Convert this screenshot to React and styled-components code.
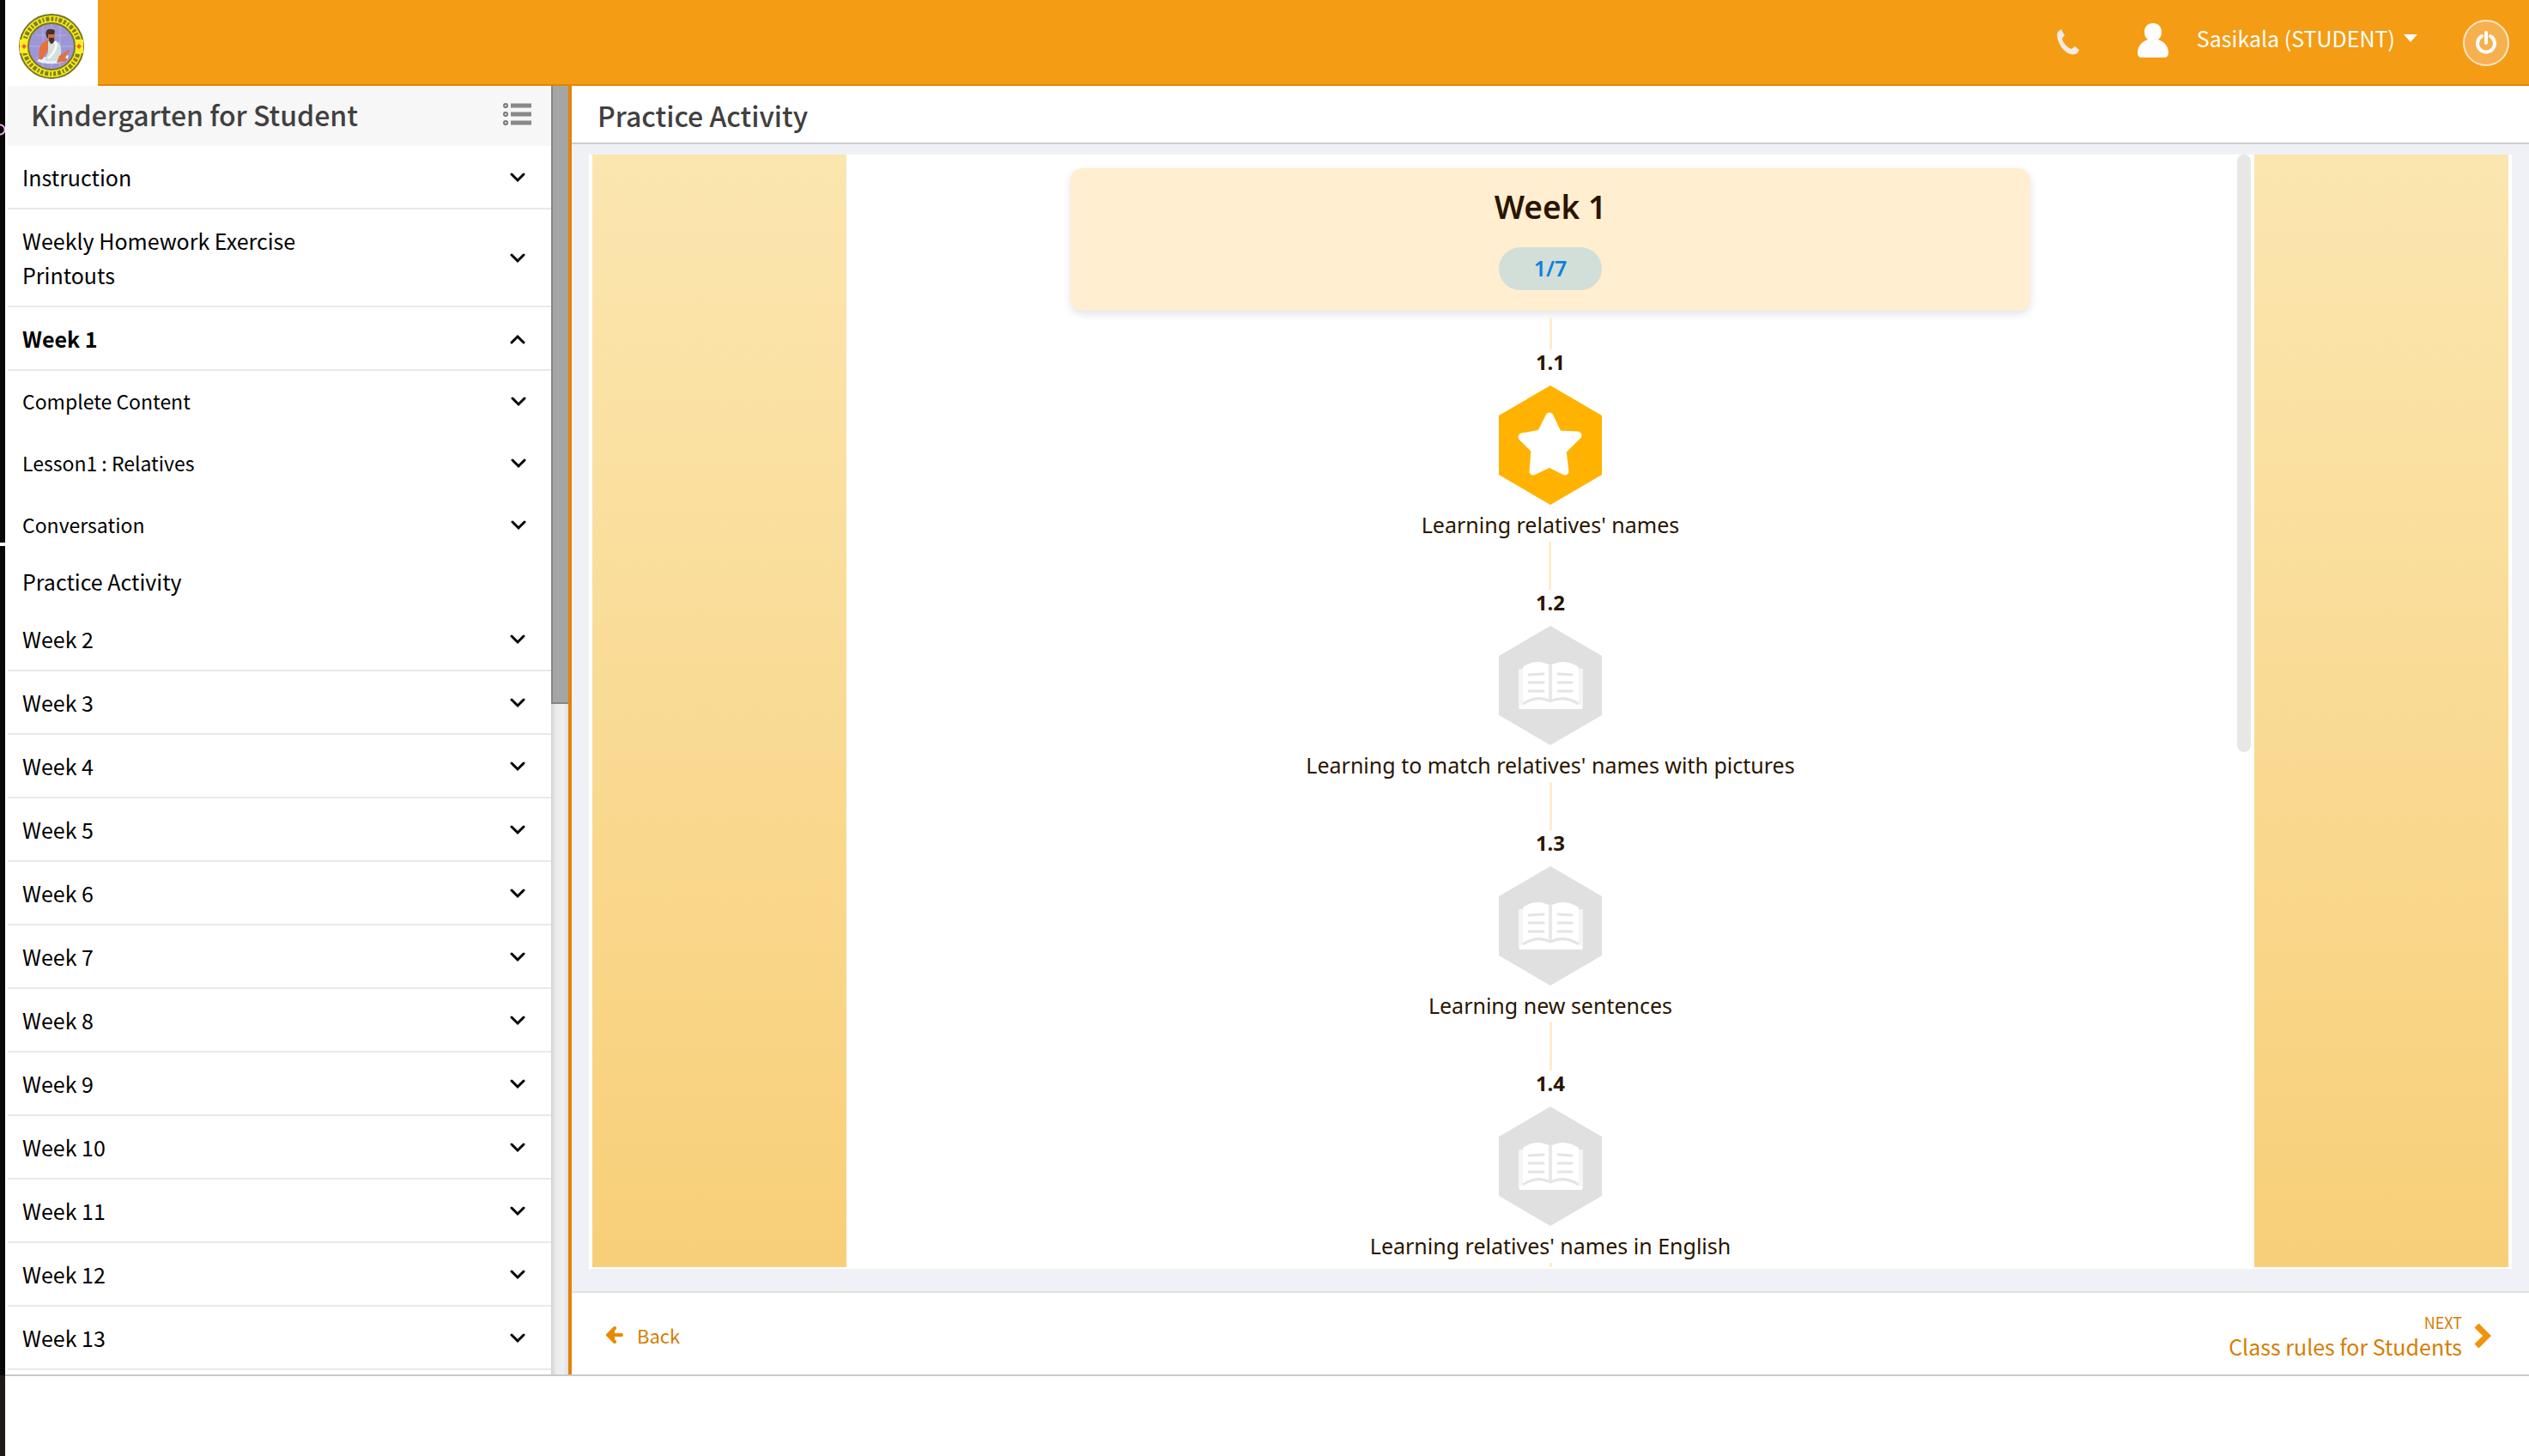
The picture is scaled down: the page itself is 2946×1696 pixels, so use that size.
import React from "react";
import styled, { createGlobalStyle } from "styled-components";

const lessons = [
  { id: "instruction", title: "Instruction" },
  { id: "homework", title: "Weekly Homework Exercise Printouts" },
  {
    id: "week-1",
    title: "Week 1",
    open: true,
    children: [
      { id: "complete", title: "Complete Content", arrow: true },
      { id: "lesson1", title: "Lesson1 : Relatives", arrow: true },
      { id: "conversation", title: "Conversation", arrow: true },
      { id: "practice", title: "Practice Activity", arrow: false },
    ],
  },
  ...Array.from({ length: 12 }, (_, i) => ({
    id: `week-${i + 2}`,
    title: `Week ${i + 2}`,
  })),
];

const steps = [
  { id: "1.1", title: "Learning relatives' names", current: true },
  { id: "1.2", title: "Learning to match relatives' names with pictures" },
  { id: "1.3", title: "Learning new sentences" },
  { id: "1.4", title: "Learning relatives' names in English" },
];

function Logo() {
  return (
    <svg width="80" height="80" viewBox="0 0 80 80" aria-label="School logo">
      <circle cx="40" cy="40" r="37" fill="#f3ea1c" stroke="#77752c" strokeWidth="2" />
      <circle
        cx="40"
        cy="40"
        r="32"
        fill="none"
        stroke="#5d5a12"
        strokeWidth="5"
        strokeDasharray="3 2 2 2 4 2"
        opacity="0.75"
      />
      <path d="M3 32h9v16H3zM68 32h9v16h-9z" fill="#f8ee22" />
      <circle cx="40" cy="40" r="27" fill="#9c96d6" stroke="#77752c" strokeWidth="2" />
      <path
        d="M22 27h36M15 40h50M22 53h36M30 16v48M40 14v52M50 16v48"
        stroke="#b4afe2"
        strokeWidth="1"
        fill="none"
      />
      <path d="M5 40l3-3 3 3-3 3zM69 40l3-3 3 3-3 3z" fill="#f0642a" />
      <path d="M23 57c4-5 10-5 15-4l21-3c2 4-2 9-8 9-9 2-22 2-28-2z" fill="#e8f0f5" />
      <path d="M36 33c-6 1-10 5-10 12l-1 9c3 3 6 1 6-3l3-4 8-13z" fill="#e8703c" />
      <path d="M36 34l12 1c4 5 4 12 2 19-5 4-12 4-18 2l4-9z" fill="#d3dfdd" />
      <path d="M44 34c3 6 1 12-8 20" fill="none" stroke="#f5faf7" strokeWidth="3" />
      <path d="M49 51l11-7 1 2-5 7 3 2-3 3-10 1z" fill="#dc7448" />
      <circle cx="39" cy="27" r="5" fill="#c66f42" />
      <path d="M34 22c2-3 8-3 10 0l-1 4h-7v5c-3-3-3-6-2-9zM37 30h6c1 4-1 7-3 7s-3-3-3-7z" fill="#4b3028" />
    </svg>
  );
}

function Chevron({ up }) {
  return (
    <svg width="20" height="12" viewBox="0 0 20 12" aria-hidden="true">
      <path
        d={up ? "M3 10l7-7 7 7" : "M3 2l7 7 7-7"}
        fill="none"
        stroke="#000"
        strokeWidth="3"
        strokeLinecap="round"
      />
    </svg>
  );
}

function StarHexagon() {
  return (
    <svg width="120" height="139" viewBox="0 0 120 139" aria-hidden="true">
      <path d="M60 0l60 35v69l-60 35L0 104V35z" fill="#ffb300" />
      <path
        d="M59 36l10 21 23 1-18 18 3 24-18-9-19 9 2-25-15-15 22-4z"
        fill="#fff"
        stroke="#fff"
        strokeWidth="9"
        strokeLinejoin="round"
      />
    </svg>
  );
}

function BookHexagon() {
  return (
    <svg width="120" height="139" viewBox="0 0 120 139" aria-hidden="true">
      <path d="M60 0l60 35v69l-60 35L0 104V35z" fill="#e0e0e0" />
      <path d="M23 50h75v44q0 3-3 3H26q-3 0-3-3z" fill="#f5f5f5" />
      <path d="M28 48q15-11 32-2 17-9 33 2v43H28z" fill="#fff" />
      <path d="M24 93q20-12 36-4 17-9 37 4v4H24z" fill="#fff" />
      <path d="M28 91q17-11 32-3 16-8 33 3" fill="none" stroke="#e4e4e4" strokeWidth="3" />
      <path d="M60 46v42" stroke="#e8e8e8" strokeWidth="4" />
      <path
        d="M35 57l17-1M35 66h17M35 76h17M69 56l16 1M69 66h16M69 76h16"
        stroke="#e4e4e4"
        strokeWidth="3"
        strokeLinecap="round"
      />
    </svg>
  );
}

function Header() {
  return (
    <TopBar>
      <LogoBox href="#home">
        <Logo />
      </LogoBox>
      <TopActions>
        <IconButton aria-label="Call">
          <svg width="28" height="32" viewBox="0 0 28 32">
            <path
              d="M2 3l4-3 4 7-3 4c2 6 6 10 11 12l4-3 5 4-2 4c-5 3-12 1-17-5C3 17 0 9 2 3z"
              fill="#f0ebe4"
            />
          </svg>
        </IconButton>
        <UserMenu>
          <svg width="36" height="40" viewBox="0 0 36 40" aria-hidden="true">
            <path
              d="M18 0c6 0 10 4 10 10 0 4-1 7-4 9 8 3 12 8 12 16 0 3-2 5-5 5H5c-3 0-5-2-5-5 0-8 4-13 12-16-3-2-4-5-4-9C8 4 12 0 18 0z"
              fill="#fdfdfd"
            />
          </svg>
          <UserName>
            Sasikala (STUDENT)
            <svg width="16" height="9" viewBox="0 0 16 9" aria-hidden="true">
              <path d="M0 0h16L8 9z" fill="#fff" />
            </svg>
          </UserName>
        </UserMenu>
        <PowerButton aria-label="Log out">
          <svg width="26" height="28" viewBox="0 0 26 28">
            <path
              d="M8 6a10 10 0 1 0 10 0M13 2v12"
              fill="none"
              stroke="#fff"
              strokeWidth="4"
              strokeLinecap="round"
            />
          </svg>
        </PowerButton>
      </TopActions>
    </TopBar>
  );
}

function Sidebar() {
  return (
    <SidebarWrapper>
      <Menu>
        <MenuHeader>
          <MenuTitle>Kindergarten for Student</MenuTitle>
          <IconButton aria-label="Contents">
            <svg width="34" height="28" viewBox="0 0 34 28">
              <g fill="none" stroke="#777" strokeWidth="2">
                <circle cx="4" cy="4" r="2" />
                <circle cx="4" cy="14" r="2" />
                <circle cx="4" cy="24" r="2" />
              </g>
              <path d="M10 4h24M10 14h24M10 24h24" stroke="#888" strokeWidth="5" />
            </svg>
          </IconButton>
        </MenuHeader>
        {lessons.map((item) => (
          <React.Fragment key={item.id}>
            <MenuRow $active={item.open} aria-expanded={!!item.open}>
              <span>{item.title}</span>
              <Chevron up={item.open} />
            </MenuRow>
            {item.children?.map((child) => (
              <SubRow key={child.id} $leaf={!child.arrow}>
                <span>{child.title}</span>
                {child.arrow && <Chevron />}
              </SubRow>
            ))}
          </React.Fragment>
        ))}
      </Menu>
      <MenuTrack>
        <MenuThumb />
      </MenuTrack>
    </SidebarWrapper>
  );
}

function PracticePath() {
  return (
    <Path>
      <WeekCard>
        <WeekTitle>Week 1</WeekTitle>
        <Progress>1/7</Progress>
      </WeekCard>
      <Connector $height={37} />
      {steps.map((step) => (
        <Step key={step.id}>
          <StepNumber>{step.id}</StepNumber>
          <StepButton aria-label={step.title}>
            {step.current ? <StarHexagon /> : <BookHexagon />}
          </StepButton>
          <StepTitle>{step.title}</StepTitle>
          <Connector $height={56} />
        </Step>
      ))}
    </Path>
  );
}

function App() {
  return (
    <>
      <GlobalStyle />
      <Page>
        <WindowEdge />
        <Shell>
          <Header />
          <Body>
            <Sidebar />
            <Main>
              <PageTitle>Practice Activity</PageTitle>
              <Stage>
                <Curtain />
                <Viewport>
                  <PracticePath />
                  <StageThumb />
                </Viewport>
                <Curtain />
              </Stage>
              <Footer>
                <BackLink href="#back">
                  <svg width="20" height="20" viewBox="0 0 20 20" aria-hidden="true">
                    <path
                      d="M10 2l-8 8 8 8M3 10h15"
                      fill="none"
                      stroke="#e88a00"
                      strokeWidth="4"
                      strokeLinecap="round"
                    />
                    <path d="M10 4l-7 6 7 6z" fill="#e88a00" />
                  </svg>
                  Back
                </BackLink>
                <NextLink href="#next">
                  <span>
                    <small>NEXT</small>
                    Class rules for Students
                  </span>
                  <svg width="20" height="30" viewBox="0 0 20 30" aria-hidden="true">
                    <path d="M3 3l12 12L3 27" fill="none" stroke="#f0930c" strokeWidth="7" />
                  </svg>
                </NextLink>
              </Footer>
            </Main>
          </Body>
        </Shell>
      </Page>
    </>
  );
}

const GlobalStyle = createGlobalStyle`
  * {
    box-sizing: border-box;
  }

  body {
    margin: 0;
    background: #fff;
    color: #000;
    font-family: "Noto Sans CJK SC", "Noto Sans", sans-serif;
    font-size: 25px;
  }

  button {
    padding: 0;
    border: 0;
    background: none;
    color: inherit;
    font: inherit;
    text-align: left;
    cursor: pointer;
  }

  a {
    color: inherit;
    text-decoration: none;
  }

  svg {
    display: block;
    flex: none;
  }
`;

const Page = styled.div`
  display: flex;
  height: 100vh;
  overflow: hidden;
`;

const WindowEdge = styled.div`
  flex: none;
  width: 6px;
  background: radial-gradient(circle at 0 151px, #000 4px, #f3a6ee 5px, #f3a6ee 6px, transparent 7px),
    linear-gradient(#0a0807 632px, #fff 632px, #fff 636px, #0a0807 636px, #0a0807 1602px, #1d1a18 1602px);
`;

const Shell = styled.div`
  display: flex;
  flex: 1;
  flex-direction: column;
  min-width: 0;
  height: calc(100vh - 93px);
  border-bottom: 2px solid #c9c9c9;
`;

const TopBar = styled.header`
  display: flex;
  flex: none;
  justify-content: space-between;
  height: 100px;
  background: #f49c14;
  border-bottom: 2px solid #e18400;
`;

const LogoBox = styled.a`
  display: flex;
  align-items: center;
  width: 108px;
  height: 100px;
  padding: 8px 14px 0;
  background: #fff;
`;

const TopActions = styled.div`
  display: flex;
  align-items: center;
  padding: 2px 23px 0 0;
`;

const IconButton = styled.button`
  display: flex;
`;

const UserMenu = styled.button`
  display: flex;
  align-items: center;
  gap: 33px;
  margin: 0 53px 6px 67px;
`;

const UserName = styled.span`
  display: flex;
  align-items: center;
  gap: 10px;
  padding-bottom: 6px;
  color: #fff;
`;

const PowerButton = styled.button`
  display: flex;
  align-items: center;
  justify-content: center;
  width: 54px;
  height: 54px;
  border: 2px solid #fbe6c8;
  border-radius: 50%;
  background: #f6b04e;
`;

const Body = styled.div`
  display: flex;
  flex: 1;
  min-height: 0;
`;

const SidebarWrapper = styled.aside`
  display: flex;
  flex: none;
  width: 660px;
  border-right: 4px solid #e58205;
`;

const Menu = styled.nav`
  display: flex;
  flex: 1;
  flex-direction: column;
  padding-left: 3px;
  overflow: hidden;
`;

const MenuHeader = styled.div`
  display: flex;
  flex: none;
  align-items: center;
  justify-content: space-between;
  height: 70px;
  padding: 0 23px 4px 27px;
  background: #f7f7f7;
`;

const MenuTitle = styled.h2`
  margin: 0;
  color: #404040;
  font-size: 32px;
  font-weight: 500;
  line-height: 40px;
`;

const MenuRow = styled.button`
  display: flex;
  flex: none;
  align-items: center;
  justify-content: space-between;
  padding: 16px 29px 16px 17px;
  border-bottom: 2px solid #e9e9e9;
  font-weight: ${({ $active }) => ($active ? 700 : 400)};
  line-height: 40px;

  span {
    max-width: 400px;
  }

  svg {
    margin-top: 2px;
  }
`;

const SubRow = styled.button`
  display: flex;
  flex: none;
  align-items: center;
  justify-content: space-between;
  height: ${({ $leaf }) => ($leaf ? 60 : 72)}px;
  padding: 0 28px 2px 17px;
  font-size: ${({ $leaf }) => ($leaf ? 25 : 23)}px;

  svg {
    margin-top: 2px;
  }
`;

const MenuTrack = styled.div`
  flex: none;
  width: 20px;
  background: linear-gradient(90deg, #d2d2d2, #ececec 30%, #f0f0f0 70%, #dcdfe4);
`;

const MenuThumb = styled.div`
  height: 48%;
  border: solid #858585;
  border-width: 0 0 2px 2px;
  background: #a5a5a5;
`;

const Main = styled.main`
  display: flex;
  flex: 1;
  flex-direction: column;
  min-width: 0;
  background: #f0f1f6;
`;

const PageTitle = styled.h1`
  flex: none;
  margin: 0;
  height: 68px;
  padding: 14px 30px;
  border-bottom: 2px solid #ccccd0;
  background: #fff;
  color: #404040;
  font-size: 32px;
  font-weight: 500;
  line-height: 40px;
`;

const Stage = styled.section`
  display: flex;
  flex: 1;
  min-height: 0;
  margin: 12px 20px 26px;
  border: solid #fff;
  border-width: 0 4px 2px;
  background: #fff;
`;

const Curtain = styled.div`
  flex: none;
  width: 296px;
  background: linear-gradient(#fbe6b0, #f8cf78);
`;

const Viewport = styled.div`
  position: relative;
  flex: 1;
  overflow: hidden;
`;

const Path = styled.div`
  display: flex;
  flex-direction: column;
  align-items: center;
  padding-top: 16px;
  color: #2a1500;
  font-family: "Noto Sans", sans-serif;
  font-size: 25px;
`;

const StageThumb = styled.div`
  position: absolute;
  top: 0;
  right: 4px;
  width: 16px;
  height: 696px;
  border-radius: 8px;
  background: #e7e7e5;
`;

const WeekCard = styled.div`
  display: flex;
  flex-direction: column;
  align-items: center;
  gap: 22px;
  width: 1118px;
  max-width: 90%;
  height: 166px;
  margin-bottom: 8px;
  padding-top: 20px;
  border-radius: 14px;
  background: #ffeed0;
  box-shadow: 0 4px 10px rgba(60, 70, 100, 0.15);
`;

const WeekTitle = styled.h3`
  margin: 0;
  font-size: 37px;
  font-weight: 600;
  line-height: 50px;
`;

const Progress = styled.span`
  width: 120px;
  padding-bottom: 2px;
  border-radius: 25px;
  background: #d2ded8;
  color: #0c80e0;
  font-weight: 600;
  line-height: 48px;
  text-align: center;
`;

const Connector = styled.div`
  width: 3px;
  height: ${({ $height }) => $height}px;
  background: #ffeccb;
`;

const Step = styled.div`
  display: flex;
  flex-direction: column;
  align-items: center;
`;

const StepNumber = styled.strong`
  height: 42px;
  font-size: 24px;
  font-weight: 700;
  line-height: 30px;
`;

const StepButton = styled.button`
  display: block;
`;

const StepTitle = styled.p`
  height: 43px;
  margin: 0;
  padding-top: 7px;
  line-height: 32px;
`;

const Footer = styled.footer`
  display: flex;
  flex: none;
  align-items: center;
  justify-content: space-between;
  height: 97px;
  padding: 4px 44px 0 40px;
  border-top: 2px solid #e0e1e8;
  background: #fff;
  color: #d67d00;
`;

const BackLink = styled.a`
  display: flex;
  align-items: center;
  gap: 16px;
  padding-bottom: 2px;
  font-size: 22px;
`;

const NextLink = styled.a`
  display: flex;
  align-items: center;
  gap: 14px;
  line-height: 32px;
  text-align: right;

  small {
    display: block;
    font-size: 18px;
    line-height: 24px;
  }
`;

export default App;
